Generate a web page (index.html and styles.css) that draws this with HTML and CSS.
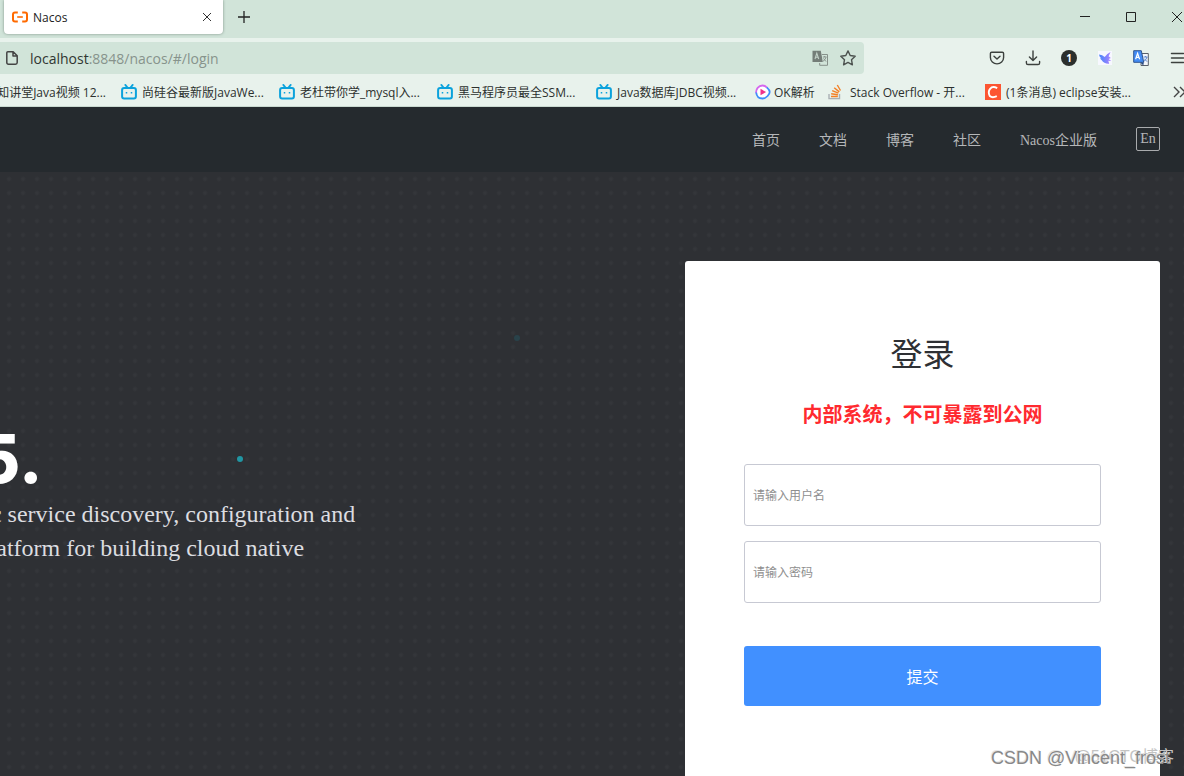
FILE: index.html
```html
<!DOCTYPE html>
<html lang="zh-CN">
<head>
<meta charset="utf-8">
<title>Nacos</title>
<link rel="stylesheet" href="styles.css">
</head>
<body>
<svg class="defs" aria-hidden="true">
  <symbol id="tv" viewBox="0 0 16 16"><path d="M4.3 .9 6.3 3.4M11.7 .9 9.7 3.4" stroke="#0ba2dc" stroke-width="1.8" stroke-linecap="round"/><rect x="1.1" y="3.9" width="13.8" height="10.7" rx="2" fill="none" stroke="#0ba2dc" stroke-width="2"/><path d="M5.5 8v1.6M10.5 8v1.6" stroke="#0ba2dc" stroke-width="1.5"/></symbol>
</svg>
<div class="page">
  <header class="browser">
    <div class="tabs">
      <div class="tab">
        <svg class="i16" viewBox="0 0 16 16" fill="none" stroke="#ff6a00" stroke-width="2"><path d="M5.8 3.5H3Q1 3.5 1 5.5v5q0 2 2 2h2.8M10.2 3.5H13q2 0 2 2v5q0 2-2 2h-2.8"/><path d="M5.2 8h5.6" stroke-width="1.6"/></svg>
        <span class="tab-title">Nacos</span>
        <button class="icon-btn" aria-label="关闭标签页"><svg class="i16" viewBox="0 0 16 16" stroke="#333"><path d="m4 4 8 8M12 4l-8 8"/></svg></button>
      </div>
      <button class="icon-btn" aria-label="新建标签页"><svg class="i16" viewBox="0 0 16 16" stroke="#222" stroke-width="1.3"><path d="M8 2v12M2 8h12"/></svg></button>
      <div class="window-buttons">
        <button class="icon-btn" aria-label="最小化"><svg class="i16" viewBox="0 0 16 16" stroke="#222"><path d="M3 7.5h10"/></svg></button>
        <button class="icon-btn" aria-label="最大化"><svg class="i16" viewBox="0 0 16 16" stroke="#222" fill="none"><path d="M3.5 3.5h9v9h-9z"/></svg></button>
        <button class="icon-btn" aria-label="关闭"><svg class="i16" viewBox="0 0 16 16" stroke="#222"><path d="m3 3 10 10M13 3 3 13"/></svg></button>
      </div>
    </div>
    <div class="toolbar">
      <div class="address">
        <svg class="i16" viewBox="0 0 16 16" fill="none" stroke="#444" stroke-width="1.5" stroke-linejoin="round"><path d="M3.8 1.8h5.4l4 4v6.7q0 1.7-1.7 1.7H4.5q-1.7 0-1.7-1.7V2.8q0-1 1-1zM9 2v4h4"/></svg>
        <span class="url">localhost<span class="url-path">:8848/nacos/#/login</span></span>
        <button class="icon-btn" aria-label="翻译"><svg class="i16" viewBox="0 0 16 16"><path d="M.5.7h8.3l2 11.2H.5z" fill="#747d78"/><path d="m3 9 1.8-5.8L6.7 9M3.6 7.2h2.5" stroke="#c3d2c9" stroke-width="1.1" fill="none"/><path d="M9.8 4.5h5.7v10.8H7.7V13" fill="none" stroke="#87918b"/><path d="M10.8 7h3.7M12.7 6v1M14 7.3q-1 2.8-3 4M11.5 8.5l2.5 3" stroke="#87918b" fill="none"/></svg></button>
        <button class="icon-btn" aria-label="收藏"><svg class="i16" viewBox="0 0 16 16" fill="none" stroke="#4c524f" stroke-width="1.4" stroke-linejoin="round"><path d="m8 .9 2.2 4.6 5 .7-3.7 3.5.9 5.1L8 12.4l-4.4 2.4.9-5.1L.8 6.2l5-.7z"/></svg></button>
      </div>
      <div class="tools">
        <button class="icon-btn" aria-label="Pocket"><svg class="i16" viewBox="0 0 16 16" fill="none" stroke="#3c413e" stroke-width="1.4" stroke-linecap="round" stroke-linejoin="round"><path d="M2.7 2.2h10.6q1.3 0 1.3 1.3v4A6.6 6.4 0 0 1 1.4 7.5v-4q0-1.3 1.3-1.3z"/><path d="m5 6.3 3 2.8 3-2.8"/></svg></button>
        <button class="icon-btn" aria-label="下载"><svg class="i16" viewBox="0 0 16 16" fill="none" stroke="#3c413e" stroke-width="1.4" stroke-linecap="round" stroke-linejoin="round"><path d="M8 1v9.2M4.4 6.9 8 10.4l3.6-3.5M1.4 11.5v1.4q0 1.6 1.6 1.6h10q1.6 0 1.6-1.6v-1.4"/></svg></button>
        <button class="icon-btn count" aria-label="1 条通知">1</button>
        <button class="icon-btn" aria-label="飞鸟插件"><svg class="i16" viewBox="0 0 16 16"><defs><linearGradient id="bird"><stop stop-color="#4385fa"/><stop offset="1" stop-color="#ad82ff"/></linearGradient></defs><path d="M1 1h14v14H1z" fill="#f7f8ff"/><path d="M2 4.5q3.5.2 5.7 2.6Q9 4.200 13.500 2L11.600 6.300l2.200 1.700-2.200 1 2.600 1.900-2.900-.1.900 2.900Q7 14 4.800 10.300L2.900 8.600l1.500-.3Q2.300 7 2 4.500z" fill="url(#bird)"/></svg></button>
        <button class="icon-btn" aria-label="翻译扩展"><svg class="i16" viewBox="0 0 16 16"><path d="M8 3.5h7.3v12H8z" fill="#f3f6fa" stroke="#59606a"/><path d="M10.5 7h4M12.5 6v1M14 7q-.8 3-3 4.200M11.3 8.7l2.8 3" stroke="#5f89cf" fill="none"/><path d="M.7.7h7.6l2.4 11.6h-10z" fill="#438cf5" stroke="#305590"/><path d="m2.6 9.3 2-6 2 6M3.3 7.4h2.6" stroke="#fff" stroke-width="1.2" fill="none"/><path d="m7.5 12.5 2.8 3 .5-3z" fill="#25477f"/></svg></button>
        <button class="icon-btn" aria-label="菜单"><svg class="i16" viewBox="0 0 16 16" stroke="#3c413e" stroke-width="1.5" stroke-linecap="round"><path d="M2.500 3.500h12M2.500 8h12M2.500 12.500h12"/></svg></button>
      </div>
    </div>
    <nav class="bookmarks" aria-label="书签">
      <a class="cut" href="#">知讲堂Java视频 12...</a>
      <a href="#"><svg class="i16"><use href="#tv"/></svg>尚硅谷最新版JavaWe...</a>
      <a href="#"><svg class="i16"><use href="#tv"/></svg>老杜带你学_mysql入...</a>
      <a href="#"><svg class="i16"><use href="#tv"/></svg>黑马程序员最全SSM...</a>
      <a href="#"><svg class="i16"><use href="#tv"/></svg>Java数据库JDBC视频...</a>
      <a class="tight" href="#"><svg class="i16" viewBox="0 0 16 16"><defs><linearGradient id="ring" x1="0" y1="1" x2="1" y2="0"><stop stop-color="#a652f4"/><stop offset="1" stop-color="#35b9fb"/></linearGradient></defs><path d="M7.5 1.5a6.500 6.500 0 1 0 0 13c4 0 7.200-4.500 7.200-6.500S11.500 1.500 7.500 1.500z" fill="#fff"/><path d="M1.200 9A6.500 6.500 0 0 1 7.500 1.500Q10 1.500 12 3.600" fill="none" stroke="#d567ee" stroke-width="1.8"/><path d="M1.200 8.500Q1.800 14.500 7.500 14.500c4 0 7.200-4.500 7.200-6.500Q14.700 6 11.800 3.400" fill="none" stroke="#3d8dfb" stroke-width="1.800"/><path d="m5.500 4.800 5.600 3.200-5.600 3.300z" fill="#f1338b"/></svg>OK解析</a>
      <a class="wide" href="#"><svg class="i16" viewBox="0 0 16 16" fill="none"><path d="M1 10v4.600h10.500V10" stroke="#aab0b4" stroke-width="1.400"/><path d="M3 12.500h6.800M3.200 9.800l6.700.9M4.200 6.700l6.200 2.500M6.200 3.800l5.100 4.100M9.300 1l3.200 5.500" stroke="#f48024" stroke-width="1.400"/></svg>Stack Overflow - 开...</a>
      <a href="#"><svg class="i16" viewBox="0 0 16 16"><path d="M0 0h16v16H0z" fill="#fc5531"/><path d="M12.200 4.200Q7.600 1.700 5.100 4.800T4.800 12q2.500 2.300 7 .2" fill="none" stroke="#fff" stroke-width="1.900"/></svg>(1条消息) eclipse安装...</a>
      <button class="icon-btn" aria-label="更多书签"><svg class="i16" viewBox="0 0 16 16" fill="none" stroke="#444" stroke-width="1.400"><path d="m2 3 5 5-5 5M8 3l5 5-5 5"/></svg></button>
    </nav>
  </header>
  <nav class="site-nav">
    <a href="#">首页</a>
    <a href="#">文档</a>
    <a href="#">博客</a>
    <a href="#">社区</a>
    <a href="#">Nacos企业版</a>
    <button class="lang">En</button>
  </nav>
  <main class="hero">
    <section class="intro">
      <h1 class="brand">5.</h1>
      <p class="slogan">an easy-to-use dynamic service discovery, configuration and<br>service management platform for building cloud native</p>
    </section>
    <i class="particle bright"></i>
    <i class="particle faint"></i>
    <form class="login">
      <h2 class="login-title">登录</h2>
      <p class="warning">内部系统，不可暴露到公网</p>
      <input class="field" type="text" placeholder="请输入用户名" aria-label="用户名">
      <input class="field" type="password" placeholder="请输入密码" aria-label="密码">
      <button class="submit" type="button">提交</button>
    </form>
    <span class="mark mark-blog">@51CTO博客</span>
    <span class="mark mark-author">CSDN @Vincent_frost</span>
  </main>
</div>
</body>
</html>
```
FILE: styles.css
```css
* { box-sizing: border-box; }
body {
  margin: 0;
  font-family: "Open Sans", "Noto Sans CJK SC", sans-serif;
  font-size: 12px;
  color: #333;
}
h1, h2, p { margin: 0; }
a { color: inherit; text-decoration: none; }
button, input { font: inherit; }
.defs { position: absolute; width: 0; height: 0; }
.i16 { display: block; flex: none; width: 16px; height: 16px; }
.icon-btn { flex: none; padding: 0; border: 0; background: none; color: inherit; }

.page { display: flex; flex-direction: column; height: 100vh; overflow: hidden; }

.browser { flex: none; background: #e8f2ec; border-bottom: 1px solid #c9d9d0; }
.tabs {
  display: flex;
  align-items: center;
  gap: 13px;
  height: 38px;
  padding: 0 0 4px 4px;
  background: #d1e4d9;
}
.tab {
  display: flex;
  align-items: center;
  gap: 5px;
  width: 219px;
  height: 34px;
  padding: 0 8px;
  border-radius: 0 0 4px 4px;
  background: #fff;
  box-shadow: 0 0 3px #7e9086;
  color: #222;
}
.tab-title { flex: 1; }
.window-buttons { display: flex; gap: 30px; margin-left: auto; margin-right: -1px; }

.toolbar { display: flex; align-items: center; height: 40px; }
.address {
  display: flex;
  align-items: center;
  gap: 12px;
  flex: 0 1 864px;
  height: 32px;
  padding: 0 8px 0 4px;
  border-radius: 0 4px 4px 0;
  background: #d1e4d9;
}
.url { flex: 1; margin-left: -2px; font-size: 14px; color: #303632; }
.url-path { color: #87938c; }
.tools { display: flex; gap: 20px; margin-left: auto; margin-right: -1px; }
.count {
  width: 16px;
  height: 16px;
  border-radius: 50%;
  background: #2b2f2d;
  color: #fff;
  font-size: 10px;
  font-weight: 700;
  line-height: 16px;
}

.bookmarks {
  display: grid;
  grid-template-columns: 121px 158px 158px 159px 159px 73px 157px 1fr 16px;
  align-items: center;
  height: 28px;
  margin-right: -4px;
  white-space: nowrap;
  color: #2c302e;
}
.bookmarks a { display: flex; align-items: center; gap: 5px; }
.bookmarks .cut { justify-content: flex-end; padding-right: 15px; }
.bookmarks .tight { gap: 3px; }
.bookmarks .wide { gap: 6px; }

.site-nav {
  display: flex;
  flex: none;
  align-items: center;
  justify-content: flex-end;
  gap: 39px;
  height: 65px;
  padding: 0 24px 2px 0;
  background: #252a2e;
  color: #b5b7b9;
  font-family: "Liberation Serif", "Noto Sans CJK SC", serif;
  font-size: 14px;
}
.lang {
  width: 24px;
  height: 24px;
  padding: 0;
  border: 1px solid #a9abad;
  border-radius: 2px;
  background: none;
  color: inherit;
}

.hero {
  position: relative;
  display: flex;
  flex: 1;
  justify-content: space-between;
  min-height: 0;
  padding-right: 24px;
  overflow: hidden;
  background: radial-gradient(circle, #34363a 1px, #2e3034 3px) 2px 0 / 14px 14px;
}
.intro { margin-left: -225px; padding-top: 248px; white-space: nowrap; }
.brand {
  padding-left: 201px;
  color: #fff;
  font-family: Inter, sans-serif;
  font-size: 68px;
  font-weight: 800;
  line-height: 77px;
}
.slogan {
  color: #dcdde0;
  font-family: "Liberation Serif", serif;
  font-size: 24px;
  line-height: 34px;
}
.particle { position: absolute; width: 6px; height: 6px; border-radius: 50%; }
.bright { left: 237px; top: 284px; background: #2196a3; }
.faint { left: 514px; top: 163px; background: #29424a; }

.login {
  display: flex;
  flex: 0 0 475px;
  flex-direction: column;
  margin-top: 89px;
  padding: 69px 59px 0;
  border-radius: 3px 3px 0 0;
  background: #fff;
  text-align: center;
}
.login-title {
  margin-bottom: 22px;
  color: #2e3034;
  font-size: 32px;
  font-weight: 400;
  line-height: 48px;
}
.warning { margin-bottom: 34px; color: #ff2a2f; font-size: 20px; font-weight: 700; line-height: 30px; }
.field {
  height: 62px;
  margin-bottom: 15px;
  padding: 0 8px;
  border: 1px solid #c7c9d3;
  border-radius: 3px;
  background: #fff;
}
.field::placeholder { color: #8f8f8f; opacity: 1; }
.submit {
  height: 60px;
  margin-top: 28px;
  border: 0;
  border-radius: 3px;
  background: #4190ff;
  color: #fff;
  font-size: 16px;
}
.mark { position: absolute; line-height: 24px; white-space: nowrap; }
.mark-author {
  right: 14px;
  bottom: 6px;
  color: #888;
  font-family: "Liberation Sans", sans-serif;
  font-size: 18px;
  text-shadow: -1px -1px 0 #e4e4e4;
}
.mark-blog {
  right: 10px;
  bottom: 7px;
  color: #c3c3c3;
  font-family: "Liberation Sans", "Noto Sans CJK SC", sans-serif;
  font-size: 16px;
}
```
